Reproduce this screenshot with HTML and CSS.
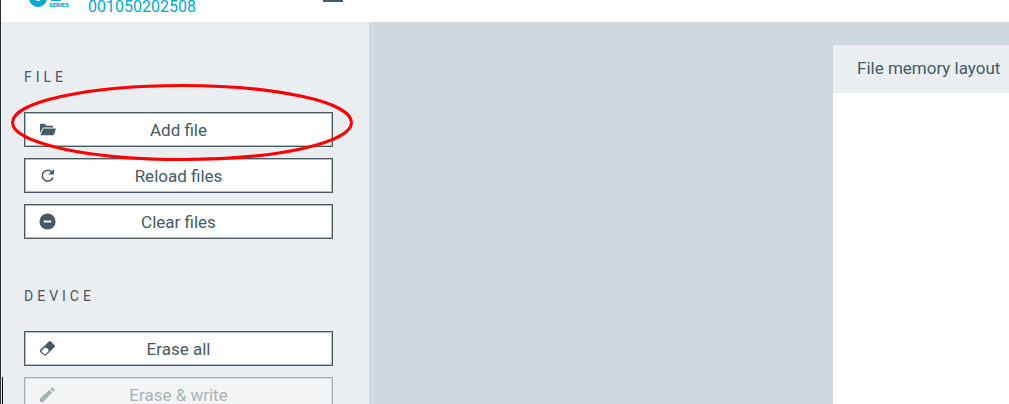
FILE: index.html
```
<!DOCTYPE html>
<html lang="en">
<head>
    <meta charset="UTF-8">
    <meta name="viewport" content="width=device-width, initial-scale=1.0">
    <title>Programmer</title>
    <link rel="stylesheet" href="styles.css">
</head>
<body>
    <header class="header">
        <svg class="logo" width="42" height="20" viewBox="0 0 42 20" aria-hidden="true">
            <circle cx="10" cy="10" r="6" fill="none" stroke="#00a9ce" stroke-width="6"/>
            <path d="M23 10h10v3H23z" fill="#00a9ce"/>
            <text class="logo-text" x="21" y="19">SERIES</text>
        </svg>
        <a class="serial" href="#">001050202508</a>
        <button class="eject" aria-label="Eject device">
            <svg width="20" height="20" viewBox="0 0 20 20">
                <path d="M10 2l10 11H0zM0 16h20v4H0z" fill="#455a64"/>
            </svg>
        </button>
    </header>

    <div class="content">
        <aside class="sidebar">
            <span class="caret"></span>
            <section class="group">
                <h2>File</h2>
                <div class="add-file">
                    <button class="btn">
                        <svg class="icon" viewBox="0 0 18 18">
                            <path d="M1 13V4q0-1 1-1h4l2 2h6q1 0 1 1v1H5q-1 0-1.400 1z" fill="#455a64"/>
                            <path d="M4.500 8H18l-2 6q-.4 1-1.500 1H1.500z" fill="#455a64"/>
                        </svg>
                        Add file
                    </button>
                    <svg class="highlight" viewBox="0 0 342 76" preserveAspectRatio="none">
                        <ellipse cx="171" cy="38" rx="169.500" ry="36.500"/>
                    </svg>
                </div>
                <button class="btn">
                    <svg class="icon" viewBox="0 0 18 18">
                        <path d="M13.500 5.200A5.800 5.800 0 1 0 14.800 11" fill="none" stroke="#455a64" stroke-width="1.700"/>
                        <path d="M15.800 2.200V8H10z" fill="#455a64"/>
                    </svg>
                    Reload files
                </button>
                <button class="btn">
                    <svg class="icon" viewBox="0 0 18 18">
                        <circle cx="9" cy="9" r="8.500" fill="#455a64"/>
                        <path d="M5 8h8v2H5z" fill="#fff"/>
                    </svg>
                    Clear files
                </button>
            </section>

            <section class="group">
                <h2>Device</h2>
                <button class="btn">
                    <svg class="icon" viewBox="0 0 18 18">
                        <path d="M1.500 10L10.500 1.500q1-1 2 0l4 4q1 1 0 2L8 16q-1.500 1.300-3 0L1.500 13q-1.300-1.500 0-3z" fill="#455a64"/>
                        <path d="M3 11L6.200 8q4 .5 4 4L7 15q-.8.600-1.500 0L3 12.500q-.7-.7 0-1.500z" fill="#fff"/>
                    </svg>
                    Erase all
                </button>
                <button class="btn" disabled>
                    <svg class="icon" viewBox="0 0 18 18">
                        <path d="M1 17v-3.500L11 4l3 3L4.500 17zM12 3l1.500-1.500q.5-.5 1 0l2 2q.5.500 0 1L15 6z" fill="#455a64"/>
                    </svg>
                    Erase &amp; write
                </button>
            </section>
        </aside>

        <main class="main">
            <section class="panel">
                <h3>File memory layout</h3>
            </section>
        </main>
    </div>
</body>
</html>
```
FILE: styles.css
```
* {
    box-sizing: border-box;
}
body {
    margin: 0;
    height: 100vh;
    display: flex;
    flex-direction: column;
    overflow: hidden;
    border-left: 1px solid #263238;
    font-family: Roboto, sans-serif;
    color: #455a64;
    background: #fff;
}
.header {
    height: 22px;
    flex: none;
    display: flex;
    align-items: flex-end;
    padding-left: 27px;
    overflow: hidden;
    background: #fff;
}
.logo {
    margin-bottom: 14px;
}
.logo-text {
    font-size: 6px;
    font-weight: 900;
    fill: #00a9ce;
}
.serial {
    width: 235px;
    margin-left: 18px;
    padding-bottom: 6px;
    font-size: 16px;
    line-height: 18px;
    color: #00a9ce;
    text-decoration: none;
}
.eject {
    display: flex;
    padding: 0;
    margin-bottom: 20px;
    border: none;
    background: none;
}
.content {
    flex: 1;
    display: flex;
    min-height: 0;
}
.sidebar {
    position: relative;
    flex: none;
    width: 368px;
    padding: 46px 36px 0 23px;
    overflow: hidden;
    background: #eaeef1;
}
.caret {
    position: absolute;
    left: 1px;
    bottom: 0;
    width: 1px;
    height: 27px;
    background: #000;
}
.group {
    display: flex;
    flex-direction: column;
    gap: 11px;
    margin-bottom: 48px;
}
.group h2 {
    margin: 0 0 15px;
    font-size: 14px;
    line-height: 18px;
    font-weight: 400;
    letter-spacing: 4px;
    text-transform: uppercase;
}
.add-file {
    position: relative;
    z-index: 1;
}
.btn {
    display: block;
    position: relative;
    width: 100%;
    height: 35px;
    padding: 0;
    border: 1px solid #455a64;
    box-shadow: inset 0 0 0 1px rgba(69, 90, 100, 0.4);
    background: #fff;
    font-family: inherit;
    font-size: 17px;
    line-height: 30px;
    color: #455a64;
    text-align: center;
}
.btn:disabled {
    opacity: 0.4;
}
.icon {
    position: absolute;
    left: 14px;
    top: 8px;
    width: 17px;
    height: 17px;
}
.highlight {
    position: absolute;
    left: -13px;
    top: -28px;
    width: calc(100% + 33px);
    height: 77px;
    pointer-events: none;
}
.highlight ellipse {
    fill: none;
    stroke: #f00;
    stroke-width: 3px;
}
.main {
    flex: 1;
    display: flex;
    justify-content: flex-end;
    padding-top: 23px;
    background: #cfd8dd;
}
.panel {
    width: 176px;
    background: #fff;
}
.panel h3 {
    margin: 0;
    padding: 11px 0 13px 24px;
    font-size: 17px;
    line-height: 24px;
    font-weight: 400;
    white-space: nowrap;
    background: #eaeef1;
}
```
